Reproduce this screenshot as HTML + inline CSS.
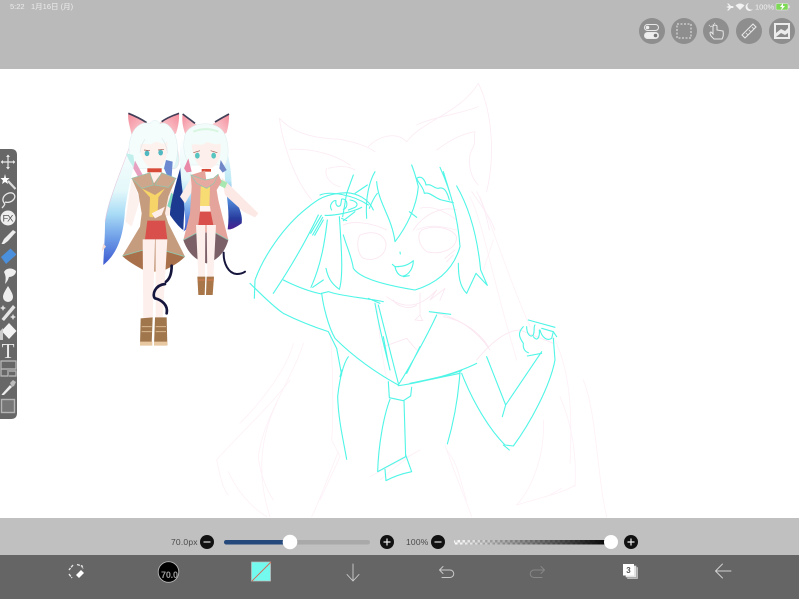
<!DOCTYPE html>
<html><head><meta charset="utf-8"><style>
html,body{margin:0;padding:0;background:#fff}
#r{position:relative;width:799px;height:599px;overflow:hidden;font-family:"Liberation Sans","Noto Sans CJK JP",sans-serif}
svg{position:absolute;left:0;top:0}
</style></head><body><div id="r">
<svg width="799" height="599" viewBox="0 0 799 599" xmlns="http://www.w3.org/2000/svg">
<defs>
<linearGradient id="hl" x1="0" y1="0" x2="0" y2="1"><stop offset="0" stop-color="#fff"/><stop offset=".45" stop-color="#e4f8fa"/><stop offset=".62" stop-color="#a9dcf6"/><stop offset=".8" stop-color="#6f9ee8"/><stop offset="1" stop-color="#3c58d0"/></linearGradient>
<linearGradient id="hr" x1="0" y1="0" x2="0" y2="1"><stop offset="0" stop-color="#f4fdfd"/><stop offset=".45" stop-color="#bfeaf6"/><stop offset=".68" stop-color="#4f86d8"/><stop offset=".88" stop-color="#283a9c"/><stop offset="1" stop-color="#4c2090"/></linearGradient>
<linearGradient id="op" x1="0" y1="0" x2="1" y2="0"><stop offset="0" stop-color="#000" stop-opacity="0"/><stop offset="1" stop-color="#000"/></linearGradient>
<linearGradient id="e1" x1="0" y1="0" x2="1" y2="1"><stop offset="0" stop-color="#f48c9c"/><stop offset="1" stop-color="#fde0e0"/></linearGradient>
<linearGradient id="e2" x1="1" y1="0" x2="0" y2="1"><stop offset="0" stop-color="#f48c9c"/><stop offset="1" stop-color="#fde0e0"/></linearGradient>
<pattern id="ck" width="5" height="5" patternUnits="userSpaceOnUse" y="540"><rect width="5" height="5" fill="#fff"/><rect width="2.500" height="2.500" fill="#ccc"/><rect x="2.500" y="2.500" width="2.500" height="2.500" fill="#ccc"/></pattern>
<filter id="b" x="-5%" y="-5%" width="110%" height="110%"><feGaussianBlur stdDeviation="0.45"/></filter>
<filter id="b2" x="-5%" y="-5%" width="110%" height="110%"><feGaussianBlur stdDeviation="0.2"/></filter>
</defs>

<rect width="799" height="69" fill="#bababa"/>
<rect y="69" width="799" height="449" fill="#fff"/>
<rect y="518" width="799" height="37" fill="#c0c0c0"/>
<rect y="555" width="799" height="44" fill="#656565"/>

<!-- status bar -->
<text x="10" y="9" font-size="7.500" fill="#ececec">5:22</text>
<text x="31" y="9" font-size="7.500" fill="#ececec">1月16日 (月)</text>
<text x="755" y="9.500" font-size="7.500" fill="#f0f0f0">100%</text>
<g fill="#f2f2f2">
<path d="M726,7 L729,6 L727,3.500 L728.500,3.500 L731,6 L733,6 Q734,7 733,8 L731,8 L728.500,10.500 L727,10.500 L729,8Z"/>
<path d="M735.500,5.500 Q740,1.500 744.500,5.500 L740,10Z"/>
<path d="M749,3 A4,4 0 1,0 753,9 A3.500,3.500 0 0,1 749,3Z"/>
</g>
<rect x="776" y="3.500" width="12" height="6.500" rx="1" fill="#7ed957" stroke="#eee" stroke-width=".5"/>
<rect x="788.500" y="5.500" width="1" height="2.500" fill="#eee"/>
<path d="M783,3 L780,7 L782,7 L781,10.500 L785,6 L783,6Z" fill="#fff"/>

<!-- top-right buttons -->
<g fill="#8e8e8e">
<circle cx="652" cy="31" r="13"/><circle cx="684" cy="31" r="13"/><circle cx="716" cy="31" r="13"/><circle cx="749" cy="31" r="13"/><circle cx="782" cy="31" r="13"/>
</g>
<g fill="none" stroke="#e8e8e8">
<rect x="644.500" y="24.500" width="14" height="6" rx="3" fill="#8e8e8e" stroke-width="1"/>
<circle cx="647.500" cy="27.500" r="1.800" fill="#eee" stroke="none"/>
<rect x="644.500" y="32.500" width="14" height="6" rx="3" fill="#eee" stroke-width="1"/>
<circle cx="655.500" cy="35.500" r="1.800" fill="#777" stroke="none"/>
<rect x="677" y="24" width="14" height="14" stroke-width="1" stroke-dasharray="2 1.500"/>
<path d="M713,26 L713,34 L711,32 Q709,32 711,36 L714,39 L722,39 Q724,36 723,31 L717,30 L717,26 Q715,24 713,26Z" stroke-width="1"/>
<path d="M709,25 L711,27 M715,23 L711,27" stroke-width="1" stroke-dasharray="1 1"/>
<path d="M742,35 L753,24 L756,27 L745,38Z" stroke-width="1.100"/>
<path d="M746,33 L748,35 M749,30 L751,32 M752,27 L754,29" stroke-width=".8"/>
</g>
<rect x="774" y="23" width="16" height="16" fill="#ececec"/>
<rect x="776" y="25" width="12" height="12" fill="#8a8a8a"/>
<path d="M776,33 L781,29 L785,31 L788,28 L788,33 L785,35 L781,33 L776,37Z" fill="#ececec"/>

<!-- pink underdrawing -->
<g fill="none" stroke="#fcecf5" stroke-width="2.600" stroke-linecap="round" stroke-linejoin="round" transform="translate(200,70) scale(.33333)" filter="url(#b2)">
<path d="M238,145 C250,230 285,330 335,390"/>
<path d="M238,145 C280,190 340,205 420,208 C470,218 500,228 525,245"/>
<path d="M270,238 C330,235 400,250 450,285"/>
<path d="M380,295 C370,320 395,345 420,350 M385,295 C420,285 450,290 465,300"/>
<path d="M505,230 C540,195 590,185 620,215"/>
<path d="M620,215 C670,150 780,130 835,40 C870,110 890,240 860,365"/>
<path d="M650,165 C700,140 790,130 835,110"/>
<path d="M710,240 C750,210 790,190 825,185 C820,210 830,215 815,240 C800,270 810,320 835,345"/>
<path d="M815,365 C840,400 870,440 885,480"/>
<path d="M830,365 C850,400 860,440 868,480"/>
<path d="M650,480 C690,460 730,470 770,480"/>
<path d="M660,415 C690,405 730,420 770,450"/>
</g>
<g fill="none" stroke="#fbe6f1" stroke-width="2.600" stroke-linecap="round" stroke-linejoin="round" transform="translate(240,130) scale(.33333)" filter="url(#b2)">
<path d="M360,315 C400,300 430,310 438,340 C440,380 400,395 370,385 C350,370 350,330 360,315Z"/>
<path d="M545,300 C580,285 630,290 650,320 C650,360 600,375 560,365 C535,345 530,315 545,300Z"/>
<path d="M520,300 C560,240 620,230 650,240"/>
<path d="M310,285 C340,270 400,280 440,300"/>
<path d="M615,385 L645,360 M620,395 L640,375"/>
<path d="M440,500 C480,530 530,545 590,480 L570,510 L615,475 L600,510"/>
<path d="M460,510 C470,530 510,540 530,525 M525,570 L548,572 L540,555Z M540,490 L540,555"/>
<path d="M430,650 L500,625 L530,660 M590,550 C650,560 710,600 750,660"/>
<path d="M610,560 C670,570 720,610 745,650 M710,690 C750,640 800,600 840,600 L940,640"/>
</g>
<g fill="none" stroke="#fdf0f7" stroke-width="2.400" stroke-linecap="round" stroke-linejoin="round" transform="translate(240,130) scale(.33333)" filter="url(#b2)">
<path d="M690,200 C730,280 750,420 830,690"/>
<path d="M760,330 L730,420"/>
<path d="M720,200 C760,300 820,480 870,590"/>
<path d="M940,620 C980,700 1000,800 990,1000"/>
<path d="M160,640 C140,720 60,820 0,880"/>
<path d="M190,640 C160,740 70,860 55,980 C60,1030 80,1080 100,1110"/>
<path d="M270,610 C280,700 280,870 275,930 L300,980 L240,1110"/>
<path d="M620,960 C660,1010 660,1060 680,1110"/>
<path d="M420,1050 C470,1010 500,980 540,960"/>
<path d="M410,510 C415,610 430,700 440,745"/>
</g>
<g fill="none" stroke="#fdf0f7" stroke-width="2.400" stroke-linecap="round" transform="translate(200,380) scale(.33333)" filter="url(#b2)">
<path d="M270,0 C200,90 110,170 50,240 C60,290 70,330 85,345"/>
<path d="M230,70 C180,170 170,290 210,410"/>
<path d="M85,275 C110,330 150,380 200,410"/>
<path d="M415,215 C380,300 360,360 335,410"/>
<path d="M735,195 C760,270 790,340 815,410"/>
<path d="M1030,120 C1035,220 1000,320 950,375 C1010,355 1090,340 1125,315"/>
<path d="M1050,345 L1085,325 M1150,0 C1190,100 1190,280 1220,410"/>
<path d="M1080,50 C1120,140 1130,240 1125,320"/>
<path d="M510,290 L660,210"/>
</g>

<!-- cyan line art -->
<g fill="none" stroke="#50f5e6" stroke-width="3.300" stroke-linecap="round" stroke-linejoin="round" transform="translate(240,130) scale(.33333)" filter="url(#b2)">
<path d="M43,505 L45,450 C70,380 130,290 200,235 C230,210 255,190 320,188 C350,190 385,205 400,240"/>
<path d="M240,195 C270,182 340,195 385,225"/>
<path d="M30,460 C60,490 100,530 130,550 C170,570 220,590 265,605 L290,655 L305,735"/>
<path d="M100,490 C140,430 190,350 235,255"/>
<path d="M212,310 L244,256 M218,315 L248,262 M224,316 L250,270"/>
<path d="M130,450 C170,470 210,485 245,492"/>
<path d="M245,490 L265,485 C300,498 370,503 430,515 M385,505 L420,520"/>
<path d="M245,490 C250,530 265,590 285,625 C340,680 410,730 475,765"/>
<path d="M475,767 C530,760 640,735 710,700 M510,760 C560,750 620,738 665,722 M540,755 L660,730"/>
<path d="M405,520 C415,580 430,640 450,720 M415,525 L475,760 M430,620 L445,700"/>
<path d="M475,765 C510,710 560,620 590,555 M500,730 L540,650 M568,545 L632,553"/>
<path d="M310,315 C320,350 335,380 340,415 C360,445 430,465 525,480 C590,460 640,420 660,350 C655,280 640,200 600,112 M610,125 L630,190"/>
<path d="M650,168 C680,220 710,300 722,420 L742,466 L708,430 L680,490 C660,470 655,440 655,400"/>
<path d="M410,155 C415,220 455,260 465,335 C500,290 530,230 535,170 C530,150 525,130 515,105"/>
<path d="M508,245 L530,262"/>
<path d="M340,135 L320,190 L308,260 M405,125 C390,150 375,200 380,265 M412,190 C400,205 392,225 388,235 M345,190 C360,180 375,170 382,165"/>
<path d="M262,270 C255,330 245,400 213,472 M250,450 L218,472 M258,415 C265,450 280,465 298,478 C310,440 305,360 298,260"/>
<path d="M275,240 C265,225 280,210 288,212 C285,225 295,235 302,225 L305,207 C325,205 325,235 310,238 M330,210 C345,212 360,222 345,232 L325,240 M255,256 C285,258 340,245 365,232 M305,265 L320,272 M345,245 L310,272"/>
<path d="M465,410 C490,410 505,405 520,392 C520,420 500,440 485,438 C475,435 468,425 465,410 L457,403 M490,440 L508,437"/>
<path d="M480,366 L481,372"/>
<path d="M530,145 C545,135 555,150 558,165 C575,160 580,175 595,175 C610,170 620,180 628,210 M530,145 C535,160 550,170 553,190 C570,185 585,205 605,210 L640,218"/>
<path d="M445,755 L448,803 L490,812 L512,798 L515,772"/>
<path d="M450,808 C430,860 415,950 413,1025 L497,980 L492,812"/>
<path d="M497,975 L515,1025 C490,1030 460,1040 438,1052 L435,1018"/>
<path d="M325,680 C310,700 298,750 293,800 C295,870 310,930 320,988 M300,740 L306,720"/>
<path d="M660,725 C655,800 640,880 622,942"/>
<path d="M665,730 C700,820 750,900 795,945 L820,948 C870,880 930,770 945,690 L940,625"/>
<path d="M790,945 L808,960"/>
<path d="M740,680 L797,825 L905,665 M797,825 L787,860 M862,678 L905,670"/>
<path d="M865,570 L945,592 M850,590 C830,610 840,625 850,640 C848,655 855,665 865,668 M860,590 C860,610 870,625 880,615 C885,600 880,590 885,585 M880,620 C890,635 900,625 898,600 M900,600 C905,620 920,635 935,625 L940,605 L950,620 M905,595 L940,605"/>
</g>

<!-- left character -->
<g transform="translate(90,100) scale(.33333)" filter="url(#b)">
<path d="M135,90 C100,200 50,300 45,370 C45,420 40,470 40,495 C70,470 100,430 105,330 C115,260 135,180 150,120Z" fill="url(#hl)"/>
<path d="M135,90 C105,190 60,280 45,365" stroke="#e8c0d8" stroke-width="1.500" fill="none"/>
<path d="M40,430 L35,455 L48,440Z" fill="#f4dcd8"/>
<path d="M235,110 C262,130 272,170 265,195 C250,220 240,200 235,180Z" fill="#dff6f5" stroke="#f0d8e0" stroke-width="1.500"/>
<path d="M125,235 L150,300 L125,380 L106,365 Z" fill="#fdf1ee"/>
<path d="M245,270 L265,295 L240,345 L225,350 L195,352 L195,330 L225,310Z" fill="#fdeeea"/>
<path d="M244,278 L258,293 L242,325 L232,318Z" fill="#7fd8c0"/>
<!-- ears -->
<path d="M115,40 C135,50 160,62 180,75 L140,110 L125,105 C120,80 112,60 115,40Z" fill="url(#e1)"/>
<path d="M115,40 C130,46 150,55 170,68" stroke="#20203c" stroke-width="5" fill="none" opacity=".85"/>
<path d="M267,40 C250,50 225,55 205,72 L245,108 L258,100 C265,80 268,60 267,40Z" fill="url(#e2)"/>
<path d="M267,40 C250,46 232,52 215,65" stroke="#20203c" stroke-width="5" fill="none" opacity=".85"/>
<!-- head -->
<path d="M125,105 C135,75 165,62 180,72 C185,58 205,58 210,72 C225,62 245,80 255,105 C268,140 262,185 250,205 L130,205 C112,155 115,130 125,105Z" fill="#f4fcfc" stroke="#dcecef" stroke-width="1.500"/>
<path d="M108,160 C115,180 125,195 135,205 L130,165Z" fill="#c0efec"/>
<path d="M150,135 C152,190 180,208 195,208 C220,205 235,175 232,125 C215,140 205,120 192,128 C180,140 165,125 150,135Z" fill="#fdf2ee"/>
<path d="M165,118 C155,130 152,145 150,158 M215,115 C228,130 232,150 232,160" stroke="#dde9ec" stroke-width="2" fill="none"/>
<ellipse cx="171" cy="160" rx="7" ry="8.500" fill="#4fb8c0"/><ellipse cx="212" cy="158" rx="7" ry="8.500" fill="#4fb8c0"/>
<path d="M162,150 L180,152 M204,150 L222,148" stroke="#a05a50" stroke-width="2"/>
<path d="M135,182 L160,228 L147,235 L130,205Z" fill="#e8a0c0"/>
<path d="M228,180 L248,185 L245,230 L232,228 L222,205Z" fill="#6c88d0"/>
<path d="M172,205 L215,205 L215,217 L172,217Z" fill="#d84838"/>
<path d="M178,217 L208,217 L205,250 L185,250Z" fill="#fdeeea"/>
<!-- coat -->
<path d="M125,235 L180,218 L192,250 L215,218 L258,235 L235,290 L225,340 L235,370 L285,470 L225,452 L215,515 L170,515 L160,450 L97,468 L150,380 L155,340 L145,280Z" fill="#c69c7e"/>
<path d="M97,468 L160,450 L170,515 C140,500 115,485 97,468Z" fill="#a9714b"/>
<path d="M285,470 L225,452 L215,515 C245,500 265,490 285,470Z" fill="#a9714b"/>
<path d="M97,468 L160,450 M285,470 L225,452" stroke="#8fc8b0" stroke-width="2.500" fill="none"/>
<path d="M125,235 L180,218 L190,255 L155,265Z M258,235 L215,218 L195,255 L235,262Z" fill="#cea68c" stroke="#8fc8b0" stroke-width="2"/>
<path d="M155,265 L195,285 L225,265 L205,292 L203,335 L188,352 L178,350 L180,292Z" fill="#f6d468"/>
<path d="M185,340 L225,320 L215,345 L195,355Z" fill="#fdeeea"/>
<path d="M172,362 L225,362 L232,418 L165,418Z" fill="#d9504c"/>
<!-- legs -->
<path d="M158,418 L195,418 L188,655 L160,655Z" fill="#fcefec"/>
<path d="M197,418 L232,418 L218,655 L197,655Z" fill="#fcefec"/>
<path d="M152,655 L188,652 L185,730 L150,735Z" fill="#a0764e"/>
<path d="M195,652 L230,652 L232,735 L192,735Z" fill="#a0764e"/>
<path d="M150,725 L187,725 L187,737 L150,737Z M192,725 L232,725 L232,737 L192,737Z" fill="#e8c8a0"/>
<path d="M155,680 L185,680 M155,695 L185,695 M197,680 L228,680 M197,695 L228,695" stroke="#d8b890" stroke-width="3"/>
<path d="M245,497 C245,530 235,540 228,545 M225,552 C195,555 185,585 195,595 C215,600 235,615 230,640" stroke="#14143c" stroke-width="8" fill="none" stroke-linecap="round"/>
</g>

<!-- right character -->
<g transform="translate(90,100) scale(.33333)" filter="url(#b)">
<path d="M275,190 C260,240 240,310 240,345 C250,360 270,385 280,390 C282,340 285,300 290,250Z" fill="#1f3a90"/>
<path d="M275,110 C265,150 270,220 280,290 C285,350 290,380 280,395 L300,380 L310,300 L300,170Z" fill="url(#hl)"/>
<path d="M400,120 C420,170 425,220 425,270 C440,310 460,340 455,370 C440,380 425,390 413,388 C420,340 410,290 405,240Z" fill="url(#hr)"/>
<path d="M395,232 L505,340 L495,352 L460,335 L405,285Z" fill="#fce8e4"/>
<path d="M305,230 L270,290 L285,310 L315,260Z" fill="#fceeea"/>
<path d="M385,235 L412,248 L405,265 L385,255Z" fill="#a8e8b0"/>
<path d="M278,42 C290,55 305,65 322,75 L295,105 L285,100 C278,80 275,60 278,42Z" fill="url(#e1)"/>
<path d="M278,42 C288,50 302,60 315,70" stroke="#20203c" stroke-width="5" fill="none" opacity=".85"/>
<path d="M417,42 C400,55 385,60 368,72 L400,105 L410,98 C415,80 418,60 417,42Z" fill="url(#e2)"/>
<path d="M417,42 C402,50 388,58 375,66" stroke="#20203c" stroke-width="5" fill="none" opacity=".85"/>
<path d="M285,105 C300,60 390,60 405,105 C420,140 415,180 405,195 L300,195 C280,170 278,135 285,105Z" fill="#f2fcfa" stroke="#dcecef" stroke-width="1.500"/>
<path d="M310,95 C335,85 360,85 385,95" stroke="#d8f6e0" stroke-width="6" fill="none"/>
<path d="M305,135 C310,185 330,207 350,207 C380,205 395,175 392,130 C370,140 355,120 345,130 C330,140 320,128 305,135Z" fill="#fdf0ec"/>
<ellipse cx="322" cy="167" rx="7" ry="9" fill="#58c4c0"/><ellipse cx="371" cy="167" rx="7" ry="9" fill="#58c4c0"/>
<path d="M310,158 L330,152 M362,152 L382,158" stroke="#a05a50" stroke-width="2"/>
<path d="M295,175 L305,215 L290,217 L282,205Z" fill="#e88aa8"/>
<path d="M392,180 L410,210 L398,218 L388,205Z" fill="#7088c8"/>
<path d="M335,207 L363,207 L363,215 L335,215Z" fill="#d84838"/>
<path d="M302,225 L345,212 L350,250 L385,222 L395,245 L380,270 L385,300 L415,420 L372,400 L360,400 L325,400 L280,420 L300,340 L305,260Z" fill="#e5a49b"/>
<path d="M280,420 L322,398 L375,398 L415,420 C405,455 385,480 350,490 C310,480 290,450 280,420Z" fill="#7c6068"/>
<path d="M280,420 L322,398 M415,420 L375,398" stroke="#8fc8b0" stroke-width="2.500" fill="none"/>
<path d="M332,260 L360,255 L358,325 L345,325 L330,320Z" fill="#f6dc72"/>
<path d="M303,225 L345,240 L370,235 L385,222 L372,250 L350,265 L320,250Z" fill="#e7aaa0" stroke="#8fc8b0" stroke-width="2"/>
<path d="M330,318 L360,318 L362,335 L330,335Z" fill="#fdf2ee"/>
<path d="M330,335 L362,335 L370,375 L325,375Z" fill="#d9504c"/>
<path d="M318,375 L346,375 L345,530 L325,530Z M350,375 L378,375 L370,530 L352,530Z" fill="#fcefec"/>
<path d="M322,530 L346,530 L344,585 L325,585Z M350,530 L372,530 L368,585 L348,585Z" fill="#a8764a"/>
<path d="M325,540 L344,540 M352,540 L372,540" stroke="#d87a50" stroke-width="3"/>
<path d="M401,458 C400,490 415,520 440,522 C450,522 458,520 465,515" stroke="#14143c" stroke-width="6" fill="none" stroke-linecap="round"/>
</g>

<!-- left toolbar -->
<path d="M0,149 L11,149 Q17,149 17,155 L17,413 Q17,419 11,419 L0,419Z" fill="#676767"/>
<g fill="none" stroke="#e8e8e8" stroke-width="1.200">
<path d="M8,155 L8,169 M1,162 L15,162"/>
<path d="M6,157 L8,154.500 L10,157Z M6,167 L8,169.500 L10,167Z M3,160 L.8,162 L3,164Z M13,160 L15.200,162 L13,164Z" fill="#e8e8e8" stroke="none"/>
<path d="M8,181 L15.500,189" stroke="#ddd" stroke-width="2.200"/>
<path d="M5,174 L6,178 L9.500,178 L7,180.500 L8,184 L5,182 L2,184 L3,180.500 L.5,178 L4,178Z" fill="#fff" stroke="none"/>
<path d="M5,204 C1,200 3,195 9,193 C14,192 16,196 14,199 C12,202 8,203 5,202 M5,204 C4,206 3,207 2,208" stroke-width="1.300"/>
</g>
<circle cx="8" cy="218" r="7.500" fill="#eee"/>
<text x="8" y="221.500" font-size="9.500" text-anchor="middle" fill="#555" textLength="11">FX</text>
<path d="M1.500,244 L4,239 L13,230 L16,232 L8,241 L4,244Z" fill="#eee"/>
<path d="M10.500,248.500 L16.500,254.500 L6,264 L1,257Z" fill="#4a90dc"/>
<path d="M4,272 C6,268 12,267 16,271 C16,275 12,277 9,277 C8,280 7,282 5,284 C6,279 6,276 4,272Z" fill="#eee"/>
<path d="M8,286 C5,291 3,294 3,297 A5,5 0 0,0 13,297 C13,294 11,291 8,286Z" fill="#eee"/>
<path d="M1.500,319 L13,305 L15.500,307.500 L4,321Z" fill="#e4e4e4"/>
<path d="M3,305 l1,2 2,1 -2,1 -1,2 -1,-2 -2,-1 2,-1Z M13,314 l1,2 2,1 -2,1 -1,2 -1,-2 -2,-1 2,-1Z" fill="#ddd"/>
<path d="M9,323 L16.500,331 L9,339 L1.500,331Z" fill="#f2f2f2"/>
<path d="M0,331 L3,328 L3,340 L0,340Z" fill="#ccc"/>
<text x="8" y="358" font-size="21" font-family="Liberation Serif" text-anchor="middle" fill="#eaeaea">T</text>
<g fill="none" stroke="#bbb" stroke-width="1.200">
<path d="M1,361 H16 V369 H1Z M1,369 V376 H8 V370 M9,371 H16 V376 H9"/>
</g>
<path d="M2,394 L10,385 L12,387 L4,395 L1.500,395Z" fill="#eee"/>
<path d="M10,383 L13,380 L16,382 L14,386 L12,387Z" fill="#bbb"/>
<rect x="1.500" y="399.500" width="13" height="13" fill="#777" stroke="#b4b4b4" stroke-width="1.400"/>

<!-- sliders -->
<text x="171" y="545" font-size="8.500" fill="#4a4a4a" letter-spacing=".2">70.0px</text>
<circle cx="207" cy="542" r="7" fill="#111"/><path d="M203.500,542 H210.500" stroke="#ddd" stroke-width="1.200"/>
<rect x="224" y="540" width="146" height="4.500" rx="2.200" fill="#a9a9a9"/>
<rect x="224" y="540" width="66" height="4.500" rx="2.200" fill="#24497a"/>
<circle cx="290" cy="542" r="7.300" fill="#fff"/>
<circle cx="387" cy="542" r="7" fill="#111"/><path d="M383.500,542 H390.500 M387,538.500 V545.500" stroke="#eee" stroke-width="1.200"/>
<text x="406" y="545" font-size="8.500" fill="#4a4a4a" letter-spacing=".2">100%</text>
<circle cx="438" cy="542" r="7" fill="#111"/><path d="M434.500,542 H441.500" stroke="#ddd" stroke-width="1.200"/>
<rect x="454" y="540" width="158" height="4.500" rx="2" fill="url(#ck)"/>
<rect x="454" y="540" width="158" height="4.500" rx="2" fill="url(#op)"/>
<circle cx="611" cy="542" r="7" fill="#fff"/>
<circle cx="631" cy="542" r="7" fill="#111"/><path d="M627.500,542 H634.500 M631,538.500 V545.500" stroke="#eee" stroke-width="1.200"/>

<!-- bottom bar -->
<g fill="none" stroke="#e6e6e6" stroke-width="1.400">
<path d="M73,565 L69,570 M69,574 L72,578 M77,564.500 L82,566 L83,569" stroke-dasharray="3 1"/>
</g>
<path d="M76,575 L81,570 L84,573 L79,578Z" fill="#fff"/>
<circle cx="168.500" cy="572" r="10.300" fill="#000" stroke="#b5b5b5" stroke-width=".9"/>
<text x="169.500" y="578" font-size="9" font-weight="bold" text-anchor="middle" fill="#999" textLength="17">70.0</text>
<rect x="251.500" y="562" width="19" height="19" fill="#74f9ef" stroke="#c0c0c0" stroke-width=".7"/>
<path d="M252,581 L271,562" stroke="#d56a55" stroke-width=".9"/>
<g fill="none" stroke-linecap="round" stroke-linejoin="round">
<path d="M353,564 V580.500 M347,574.500 L353,581 L359,574.500" stroke="#cfcfcf" stroke-width=".9"/>
<path d="M439.500,570 L450,570 A3.500,3.500 0 0,1 450,577.500 L442,577.500 M443,566.500 L439.500,570 L443,573.500" stroke="#c9c9c9" stroke-width="1"/>
<path d="M544.500,570 L534,570 A3.500,3.500 0 0,0 534,577.500 L542,577.500 M541,566.500 L544.500,570 L541,573.500" stroke="#878787" stroke-width="1"/>
<path d="M716,571 H731 M722.500,564 L715.500,571 L722.500,578" stroke="#d4d4d4" stroke-width=".9"/>
</g>
<rect x="627" y="567" width="11" height="12" fill="#cfcfcf" stroke="#666" stroke-width=".4"/>
<rect x="625.500" y="565.500" width="11" height="12" fill="#e4e4e4" stroke="#666" stroke-width=".4"/>
<rect x="623" y="564" width="11" height="11.500" fill="#fff"/>
<text x="628.500" y="573" font-size="8" font-weight="bold" text-anchor="middle" fill="#555">3</text>
</svg>
</div></body></html>
